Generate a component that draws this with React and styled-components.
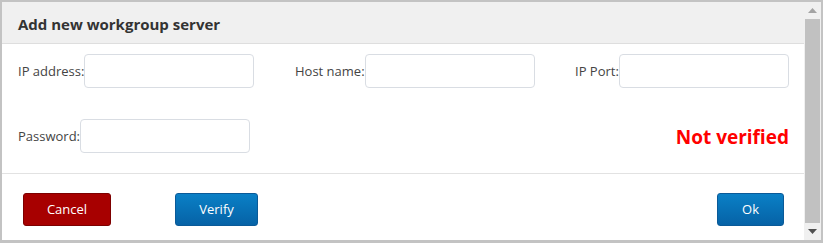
import React from "react";
import styled, { createGlobalStyle } from "styled-components";

const Global = createGlobalStyle`
  html, body { margin: 0; padding: 0; background: #fff; }
  body { font-family: "Open Sans", "Noto Sans", sans-serif; }
  * { box-sizing: border-box; }
`;

const Frame = styled.div`
  width: 823px;
  height: 243px;
  border: 2px solid #c3c3c3;
  border-bottom-width: 3px;
  display: flex;
  background: #fff;
`;

const Dialog = styled.div`
  flex: 1;
  display: flex;
  flex-direction: column;
  min-width: 0;
`;

const Header = styled.div`
  height: 42px;
  background: #f0f0f0;
  border-bottom: 1px solid #dedede;
  display: flex;
  align-items: center;
  padding: 3px 16px 0;
  font-size: 15px;
  font-weight: 700;
  color: #333;
`;

const Body = styled.div`
  height: 130px;
  border-bottom: 1px solid #e2e2e2;
  padding: 10px 14px 0 16px;
  display: grid;
  grid-template-columns: 277px 280px 1fr;
  grid-template-rows: 34px 34px;
  row-gap: 31px;
  align-content: start;
`;

const Field = styled.div`
  display: flex;
  align-items: center;
`;

const Label = styled.label`
  font-size: 13px;
  color: #444;
  white-space: nowrap;
`;

const Input = styled.input`
  width: 170px;
  height: 34px;
  border: 1px solid #d9dde3;
  border-radius: 4px;
  background: #fff;
  margin: 0;
  padding: 0 6px;
  outline: none;
`;

const Status = styled.div`
  grid-column: 2 / 4;
  display: flex;
  align-items: center;
  justify-content: flex-end;
  color: #ff0000;
  font-size: 19px;
  font-weight: 700;
  padding-top: 2px;
  padding-right: 1px;
`;

const Footer = styled.div`
  flex: 1;
  display: flex;
  align-items: center;
  padding: 4px 20px 0 21px;
`;

const Button = styled.button`
  height: 33px;
  width: ${(p) => p.$w}px;
  margin-left: ${(p) => p.$ml || 0}px;
  border-radius: 3px;
  font-family: "Open Sans", "Noto Sans", sans-serif;
  font-size: 13px;
  color: #fff;
  cursor: pointer;
  border: 1px solid ${(p) => (p.$red ? "#7d0000" : "#0a5a98")};
  background: ${(p) =>
    p.$red ? "#a70000" : "linear-gradient(#0a80c6, #0662a6)"};
  padding: 0;
`;

const Spacer = styled.div`
  flex: 1;
`;

const Scrollbar = styled.div`
  width: 17px;
  background: #f0f0f0;
  display: flex;
  flex-direction: column;
  align-items: center;
`;

const Arrow = styled.div`
  height: 17px;
  width: 100%;
  display: flex;
  align-items: center;
  justify-content: center;
  svg { display: block; }
`;

const Thumb = styled.div`
  flex: 1;
  width: 15px;
  background: #c1c1c1;
`;

export default function App() {
  return (
    <>
      <Global />
      <Frame>
        <Dialog>
          <Header>Add new workgroup server</Header>
          <Body>
            <Field>
              <Label>IP address:</Label>
              <Input />
            </Field>
            <Field>
              <Label>Host name:</Label>
              <Input />
            </Field>
            <Field>
              <Label>IP Port:</Label>
              <Input />
            </Field>
            <Field>
              <Label>Password:</Label>
              <Input type="password" />
            </Field>
            <Status>Not verified</Status>
          </Body>
          <Footer>
            <Button $red $w={88}>Cancel</Button>
            <Button $w={83} $ml={64}>Verify</Button>
            <Spacer />
            <Button $w={67}>Ok</Button>
          </Footer>
        </Dialog>
        <Scrollbar>
          <Arrow>
            <svg width="9" height="5" viewBox="0 0 9 5"><path d="M0 5 L4.5 0 L9 5 Z" fill="#a3a3a3" /></svg>
          </Arrow>
          <Thumb />
          <Arrow>
            <svg width="9" height="5" viewBox="0 0 9 5"><path d="M0 0 L4.5 5 L9 0 Z" fill="#505050" /></svg>
          </Arrow>
        </Scrollbar>
      </Frame>
    </>
  );
}
